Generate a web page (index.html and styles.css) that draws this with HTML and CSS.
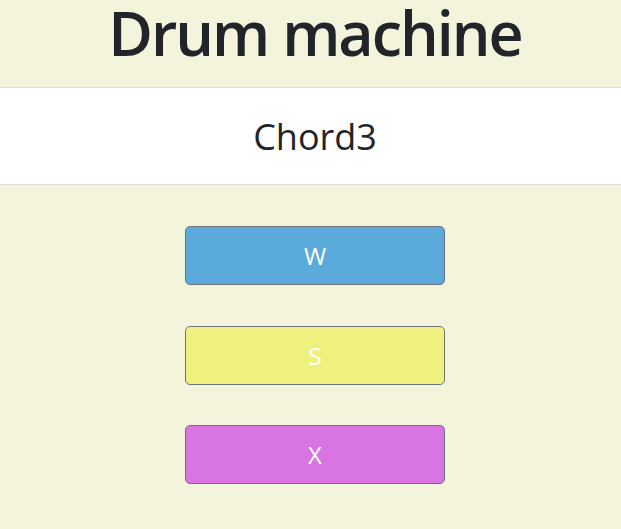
FILE: index.html
```html
<!DOCTYPE html>
<html lang="en">
<head>
<meta charset="utf-8">
<title>Drum machine</title>
<link rel="stylesheet" href="styles.css">
</head>
<body>
<div class="app">
  <header class="title-bar">
    <h1 class="title">Drum machine</h1>
  </header>
  <section class="display">
    <p class="display-text">Chord3</p>
  </section>
  <main class="pads">
    <button class="pad pad-blue">W</button>
    <button class="pad pad-yellow">S</button>
    <button class="pad pad-purple">X</button>
  </main>
</div>
</body>
</html>
```
FILE: styles.css
```css
html, body {
  margin: 0;
  padding: 0;
  background: #f4f4dc;
  font-family: "Open Sans", "Noto Sans", sans-serif;
  color: #212529;
  overflow: hidden;
}
.app {
  display: flex;
  flex-direction: column;
}
.title-bar {
  height: 87px;
  display: flex;
  justify-content: center;
  align-items: flex-start;
  padding-left: 9px;
  border-bottom: 1px solid #dedfd6;
}
.title {
  margin: 0;
  font-size: 61px;
  font-weight: 600;
  line-height: 66px;
  letter-spacing: -2px;
}
.display {
  background: #ffffff;
  height: 96px;
  display: flex;
  justify-content: center;
  align-items: center;
  padding-left: 9px;
  border-bottom: 1px solid #dedfd6;
}
.display-text {
  margin: 0;
  font-size: 36px;
  font-weight: 400;
}
.pads {
  display: flex;
  flex-direction: column;
  align-items: center;
  gap: 40.5px;
  padding-top: 41px;
  padding-left: 9px;
}
.pad {
  width: 260px;
  height: 59px;
  border: 1px solid #6c757d;
  border-radius: 5px;
  color: #ffffff;
  font-family: "Open Sans", "Noto Sans", sans-serif;
  font-size: 24px;
  padding: 0;
}
.pad-blue { background: #5aaadb; }
.pad-yellow { background: #f0f07e; }
.pad-purple { background: #d974e3; }
```
